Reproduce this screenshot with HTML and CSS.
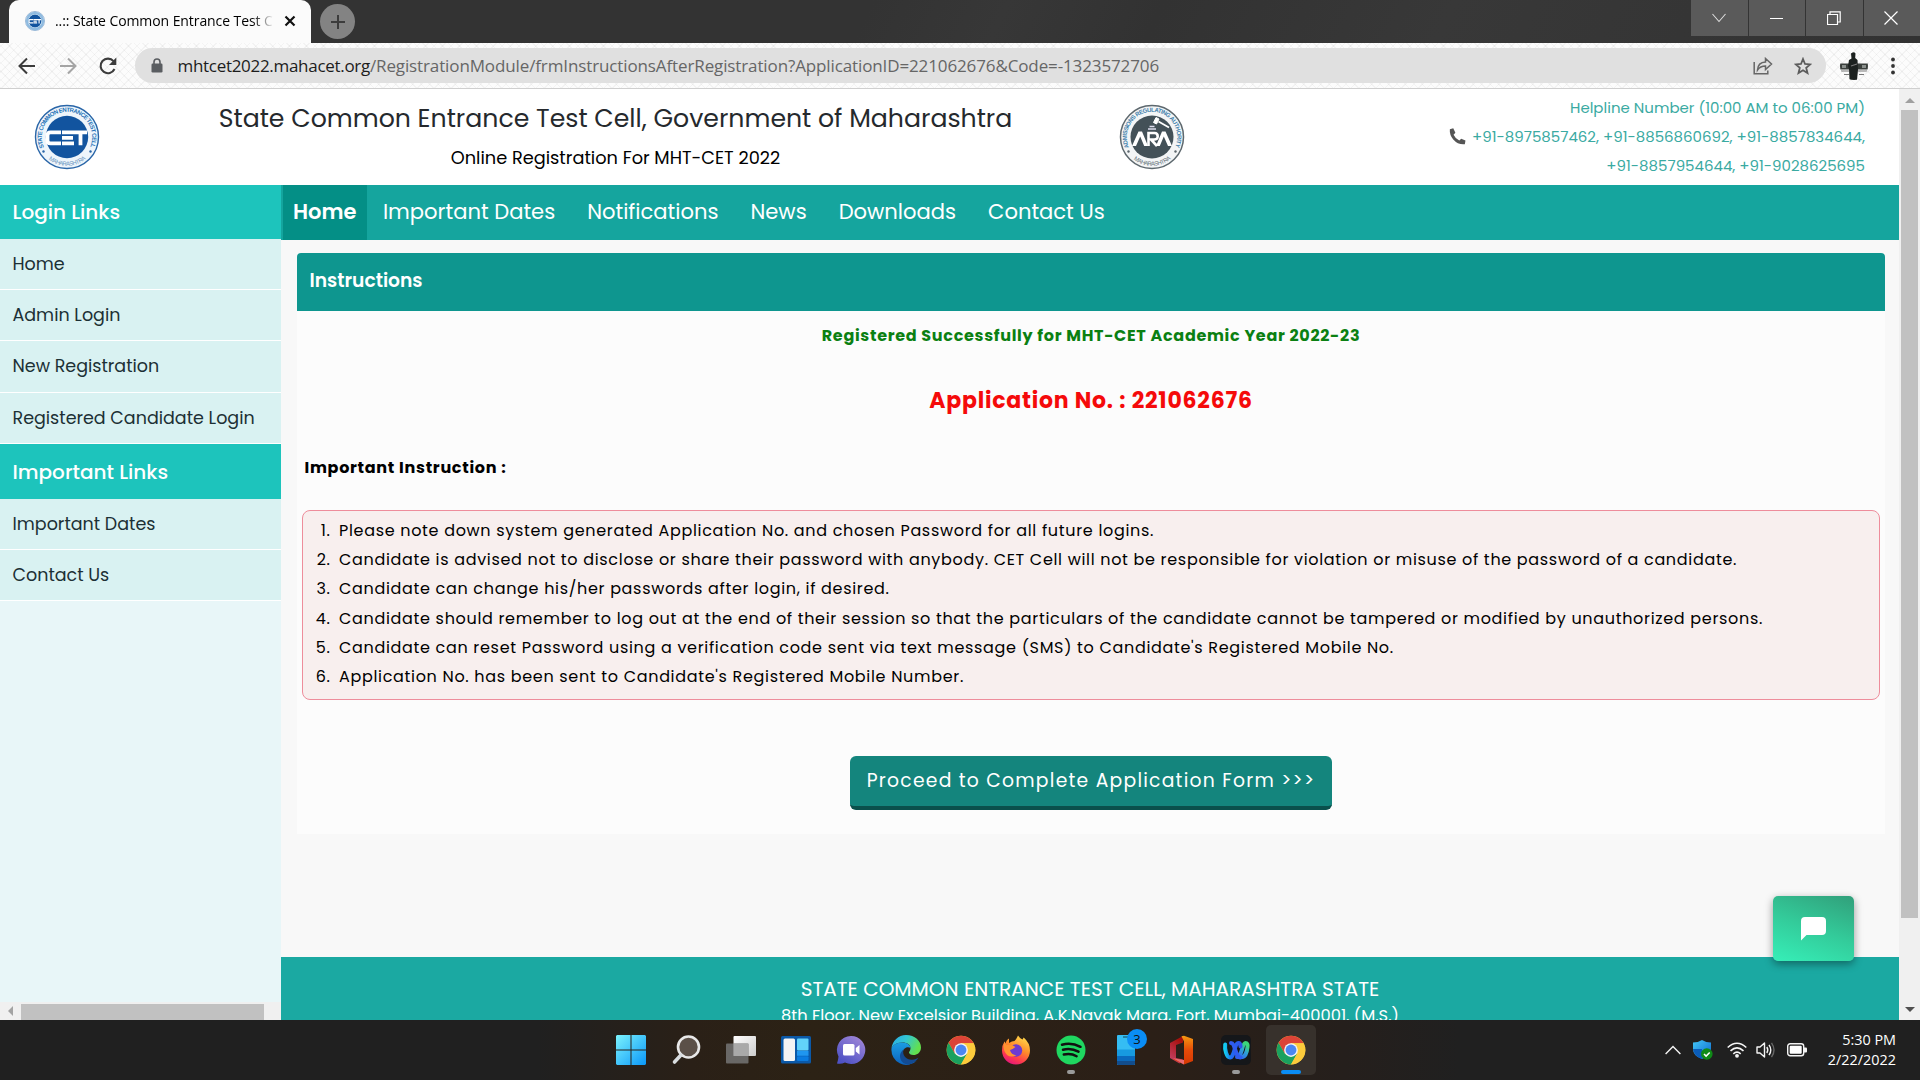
FILE: index.html
```html
<!DOCTYPE html>
<html lang="en">
<head>
<meta charset="utf-8">
<title>..:: State Common Entrance Test Cell</title>
<link rel="stylesheet" href="styles.css">
</head>
<body>
<svg class="defs" width="0" height="0" aria-hidden="true">
  <defs>
    <linearGradient id="win" x1="0" y1="0" x2="1" y2="1"><stop offset="0" stop-color="#7cf3fd"/><stop offset="1" stop-color="#0a97f8"/></linearGradient>
    <linearGradient id="tv" x1="0" y1="0" x2="1" y2="1"><stop offset="0" stop-color="#fff"/><stop offset="1" stop-color="#ccc"/></linearGradient>
    <linearGradient id="meet" x1="1" y1="0" x2="0.3" y2="1"><stop offset="0" stop-color="#a98bd8"/><stop offset=".5" stop-color="#7b6fd0"/><stop offset="1" stop-color="#4f52c4"/></linearGradient>
    <linearGradient id="edgeTop" x1="0" y1="0" x2="1" y2=".4"><stop offset="0" stop-color="#27a8e8"/><stop offset=".5" stop-color="#33c6d2"/><stop offset="1" stop-color="#62e04e"/></linearGradient>
    <linearGradient id="edgeBody" x1="0" y1="0" x2="0" y2="1"><stop offset="0" stop-color="#1b9de2"/><stop offset="1" stop-color="#0c62bd"/></linearGradient>
    <linearGradient id="fox" x1=".8" y1="0" x2=".3" y2="1"><stop offset="0" stop-color="#ffe14d"/><stop offset=".45" stop-color="#ff8a2a"/><stop offset=".75" stop-color="#ff3c4c"/><stop offset="1" stop-color="#e3157d"/></linearGradient>
    <linearGradient id="webex" x1="0" y1="0" x2="1" y2="0"><stop offset="0" stop-color="#12cdf0"/><stop offset=".4" stop-color="#1f6df2"/><stop offset="1" stop-color="#2f52e8"/></linearGradient>
    <linearGradient id="webexR" x1="0" y1="1" x2=".6" y2="0"><stop offset="0" stop-color="#2f62f0"/><stop offset=".6" stop-color="#2fa0d8"/><stop offset="1" stop-color="#3bd67a"/></linearGradient>
    <linearGradient id="office" x1="0" y1="0" x2="0" y2="1"><stop offset="0" stop-color="#f59a12"/><stop offset=".5" stop-color="#e64a08"/><stop offset="1" stop-color="#d43802"/></linearGradient>
    <linearGradient id="officeL" x1="0" y1="1" x2=".4" y2="0"><stop offset="0" stop-color="#c8476f"/><stop offset="1" stop-color="#a8100c"/></linearGradient>
    <linearGradient id="shield" x1="0" y1="0" x2="1" y2="1"><stop offset="0" stop-color="#42c5f5"/><stop offset="1" stop-color="#0b67cf"/></linearGradient>
    <symbol id="chrome" viewBox="0 0 48 48">
      <circle cx="24" cy="24" r="23" fill="#fccb3c"/>
      <path d="M24 13h20.2A23 23 0 0 0 4.1 12.5L14 30z" fill="#dc4437"/>
      <path d="M4.1 12.5A23 23 0 0 0 24 47l9.8-17.2L24 24l-9.8 5.8z" fill="#1aa15f"/>
      <path d="M24 47A23 23 0 0 0 44.2 13H24l9.6 16.8z" fill="#fccb3c"/>
      <circle cx="24" cy="24" r="11" fill="#f4f4f4"/><circle cx="24" cy="24" r="8.7" fill="#4a87f2"/>
    </symbol>
    <symbol id="cet" viewBox="0 0 66 66">
      <circle cx="33" cy="33" r="31.5" fill="#eef5fb" stroke="#2a66a8" stroke-width="1.4"/>
      <circle cx="33" cy="33" r="21.2" fill="#12549f"/>
      <g fill="none" stroke="#fff" stroke-width="3.8"><path d="M27 28.400H16.500q-3 0-3 3v5q0 3 3 3H27M28 28.400h12M28 33.900h11M28 39.400h12M39.500 28.400H53M46.500 28.400V41.200"/></g>
    </symbol>
  </defs>
</svg>

<header class="browser">
  <div class="tabstrip">
    <div class="tab">
      <svg class="favicon" viewBox="0 0 66 66"><use href="#cet"/><circle cx="33" cy="33" r="26.500" fill="none" stroke="#8fbbe0" stroke-width="8"/></svg>
      <span class="tab-title">..:: State Common Entrance Test C</span>
      <svg class="tab-close" viewBox="0 0 12 12"><path d="M1.500 1.500l9 9M10.500 1.500l-9 9" stroke="#111" stroke-width="2.200"/></svg>
    </div>
    <div class="newtab"><svg viewBox="0 0 16 16" width="16" height="16"><path d="M8 1v14M1 8h14" stroke="#3c3c3c" stroke-width="2"/></svg></div>
    <div class="winbtns">
      <span><svg viewBox="0 0 14 10" width="14" height="10"><path d="M.5 1 7 8.500 13.500 1" fill="none" stroke="#ddd" stroke-width="1.100"/></svg></span>
      <span><svg viewBox="0 0 14 10" width="14" height="10"><path d="M0 5.500h13" stroke="#fff"/></svg></span>
      <span><svg viewBox="0 0 14 14" width="14" height="14"><path d="M.5 3.500h10v10H.5zM3 3V.8h10.200V11H11" fill="none" stroke="#fff" stroke-width="1.200"/></svg></span>
      <span><svg viewBox="0 0 14 14" width="14" height="14"><path d="M.5.5l13 13M13.500.5l-13 13" stroke="#fff" stroke-width="1.200"/></svg></span>
    </div>
  </div>
  <div class="toolbar">
    <svg class="tb" viewBox="0 0 18 18"><path d="M17 9H2M9 1.500 1.500 9 9 16.500" fill="none" stroke="#3c3c3c" stroke-width="2"/></svg>
    <svg class="tb" viewBox="0 0 18 18"><path d="M1 9h15M9 1.500 16.500 9 9 16.500" fill="none" stroke="#a5a5a5" stroke-width="2"/></svg>
    <svg class="tb" viewBox="0 0 18 18"><path d="M15.500 12A7.300 7.300 0 1 1 14.500 4.200" fill="none" stroke="#3c3c3c" stroke-width="2.100"/><path d="M17.300.5V8H10z" fill="#3c3c3c"/></svg>
    <div class="omnibox">
      <svg class="lock" viewBox="0 0 12 15"><rect x=".5" y="5.500" width="11" height="9" rx="1.200" fill="#5a5d61"/><path d="M3 6V4a3 3 0 0 1 6 0v2" fill="none" stroke="#5a5d61" stroke-width="1.600"/></svg>
      <span class="url"><b>mhtcet2022.mahacet.org</b>/RegistrationModule/frmInstructionsAfterRegistration?ApplicationID=221062676&amp;Code=-1323572706</span>
      <svg class="share" viewBox="0 0 20 18"><path d="M1.200 5V16.800H14.800V13.500" fill="none" stroke="#666" stroke-width="1.500"/><path d="M4.500 13c.3-5 3-7.800 8-8V1.500l6 5.500-6 5.500V9C9 9 6.500 10 4.500 13z" fill="none" stroke="#666" stroke-width="1.500"/></svg>
      <svg class="star" viewBox="0 0 18 18"><path d="M9 2l2 5 5.200.4-4 3.400 1.300 5.200L9 13.200 4.500 16l1.300-5.200-4-3.400L7 7z" fill="none" stroke="#5c5c5c" stroke-width="1.800"/></svg>
    </div>
    <svg class="avatar" viewBox="0 0 28 28"><clipPath id="av"><circle cx="14" cy="14" r="14"/></clipPath><g clip-path="url(#av)"><path d="M0 11.500h28v6H0z" fill="#3a3f3c"/><path d="M2 13h4v3H2zM22 13h4v3h-4z" fill="#8a8f8c"/><path d="M1 19h8M18 19h9M4 22.500h5M19 22.500h5" stroke="#777" stroke-width="1.200"/><path d="M11 1.500q3-2.500 4.500 0l-.3 4.500 2.300 2 .5 10-1 10H9.500L9 17l-1-3 1-6 2.500-1.500z" fill="#1c211f"/><path d="M11 14l6-2" stroke="#777" stroke-width="1.300"/></g></svg>
    <svg class="dots" viewBox="0 0 4 18"><circle cx="2" cy="2.500" r="1.900"/><circle cx="2" cy="9" r="1.900"/><circle cx="2" cy="15.500" r="1.900"/></svg>
  </div>
</header>

<div class="viewport">
  <div class="page">
    <div class="masthead">
      <svg class="logo" viewBox="0 0 66 66"><use href="#cet"/>
        <path id="ringTop" d="M10.100 43.500A25.200 25.200 0 1 1 55.900 43.500" fill="none"/><path id="ringBottom" d="M11.700 52.800A30 30 0 0 0 54.300 52.800" fill="none"/>
        <text class="ring blue"><textPath href="#ringTop" textLength="100">STATE COMMON ENTRANCE TEST CELL</textPath></text>
        <text class="ring blue pale"><textPath href="#ringBottom" startOffset="4" textLength="40">MAHARASHTRA</textPath></text>
        <circle cx="9.500" cy="47.500" r="1.200" fill="#2a66a8"/><circle cx="56.500" cy="47.500" r="1.200" fill="#2a66a8"/>
      </svg>
      <div class="titles">
        <h1>State Common Entrance Test Cell, Government of Maharashtra</h1>
        <p>Online Registration For MHT-CET 2022</p>
      </div>
      <svg class="logo" viewBox="0 0 66 66">
        <circle cx="33" cy="33" r="31.500" fill="#f3f5f6" stroke="#5d686e" stroke-width="1.500"/><circle cx="33" cy="33" r="21.500" fill="#435158"/>
        <path d="M13 42l6.500-14.500h3.500L29 42h-3.800l-4-9.500L17 42zM37 42l6-14.500h3.500L53 42h-4l-4.200-9.500L40.800 42z" fill="#fff"/><path d="M29.500 42V29h6q3.200 0 3.200 3.300T35 35.500h-3l6 6.500" fill="none" stroke="#fff" stroke-width="2.600"/><path d="M29 25h8M30.500 22.500h5" stroke="#dde" stroke-width="1.500"/><path d="M37 13.500l-2.500 5 3 1.500 2.500-5z" fill="#fff" stroke="#fff" stroke-width="1"/><path d="M39.500 17.500l10.500 6" stroke="#fff" stroke-width="1.800"/>
        <text class="ring steel"><textPath href="#ringTop" textLength="100">ADMISSIONS REGULATING AUTHORITY</textPath></text>
        <text class="ring grey"><textPath href="#ringBottom" startOffset="4" textLength="40">MAHARASHTRA</textPath></text>
        <circle cx="9.500" cy="47.500" r="1.200" fill="#5d686e"/><circle cx="56.500" cy="47.500" r="1.200" fill="#5d686e"/>
      </svg>
      <div class="helpline">
        <div>Helpline Number (10:00 AM to 06:00 PM)</div>
        <div><svg viewBox="0 0 16 16" width="17" height="17"><path d="M.8 1.200 4 .3l2 4.200L4.300 6.300q1.600 3.600 5.400 5.500L11.500 10l4 1.800-.6 3.500Q8.600 16 4 10.800.3 6.500.8 1.200z" fill="#555"/></svg>+91-8975857462, +91-8856860692, +91-8857834644,</div>
        <div>+91-8857954644, +91-9028625695</div>
      </div>
    </div>
    <div class="columns">
      <aside class="sidebar">
        <h2>Login Links</h2>
        <a>Home</a>
        <a>Admin Login</a>
        <a>New Registration</a>
        <a>Registered Candidate Login</a>
        <h2>Important Links</h2>
        <a>Important Dates</a>
        <a>Contact Us</a>
        <div class="hscroll"><i class="arrow-left"></i><i class="hthumb"></i></div>
      </aside>
      <main class="main">
        <nav class="nav">
          <a class="on">Home</a>
          <a>Important Dates</a>
          <a>Notifications</a>
          <a>News</a>
          <a>Downloads</a>
          <a>Contact Us</a>
        </nav>
        <section class="panel">
          <h3>Instructions</h3>
          <p class="ok">Registered Successfully for MHT-CET Academic Year 2022-23</p>
          <p class="appno">Application No. : 221062676</p>
          <p class="lead">Important Instruction :</p>
          <ol class="rules">
            <li>Please note down system generated Application No. and chosen Password for all future logins.</li>
            <li>Candidate is advised not to disclose or share their password with anybody. CET Cell will not be responsible for violation or misuse of the password of a candidate.</li>
            <li>Candidate can change his/her passwords after login, if desired.</li>
            <li>Candidate should remember to log out at the end of their session so that the particulars of the candidate cannot be tampered or modified by unauthorized persons.</li>
            <li>Candidate can reset Password using a verification code sent via text message (SMS) to Candidate's Registered Mobile No.</li>
            <li>Application No. has been sent to Candidate's Registered Mobile Number.</li>
          </ol>
          <button class="proceed">Proceed to Complete Application Form &gt;&gt;&gt;</button>
        </section>
        <footer class="footer">
          <div class="org">STATE COMMON ENTRANCE TEST CELL, MAHARASHTRA STATE</div>
          <div class="addr">8th Floor, New Excelsior Building, A.K.Nayak Marg, Fort, Mumbai-400001. (M.S.)</div>
        </footer>
      </main>
    </div>
    <div class="chat"><svg viewBox="0 0 25 24" width="25" height="24"><path d="M4 0H21a4 4 0 0 1 4 4v10a4 4 0 0 1-4 4H5.500L0 23.500V4a4 4 0 0 1 4-4z" fill="#fff"/></svg></div>
  </div>
  <div class="vscroll"><i class="arrow-up"></i><i class="vthumb"></i><i class="arrow-down"></i></div>
</div>

<div class="taskbar">
  <div class="apps">
    <span><svg viewBox="0 0 30 30"><path d="M1 0h13.500v14.500H0V1zM15.500 0H29l1 1v13.500H15.500zM0 15.500h14.500V30H1l-1-1zM15.500 15.500H30V29l-1 1H15.500z" fill="url(#win)"/></svg></span>
    <span><svg viewBox="0 0 30 30"><circle cx="17.500" cy="12" r="10.500" fill="#5b5048" stroke="#e8e8e8" stroke-width="2.600"/><path d="M10 20l-6.500 7" stroke="#d9dde0" stroke-width="3.600" stroke-linecap="round"/></svg></span>
    <span><svg viewBox="0 0 30 30"><rect x="7.500" y="1" width="22.500" height="20" rx="1" fill="url(#tv)"/><rect x="0" y="8.500" width="22.500" height="20" rx="1" fill="#747474" opacity=".85"/><path d="M7.500 8.500h15v12.500h-15z" fill="#a9a9a9"/></svg></span>
    <span><svg viewBox="0 0 30 30"><rect y="1" width="30" height="27.500" rx="1.500" fill="#0b59a8"/><rect x="2.500" y="3.500" width="11.500" height="22.500" rx="1.500" fill="#f4f4f4"/><rect x="16" y="3.500" width="11.500" height="12" rx="1" fill="#62d2fa"/><rect x="16" y="16" width="11.500" height="4.800" fill="#1f96f0"/><rect x="16" y="21.300" width="11.500" height="4.700" rx="1" fill="#0a7be0"/></svg></span>
    <span><svg viewBox="0 0 30 30"><path d="M15 1a14 14 0 1 1-6 26.500Q5 29.500 1 28.500 2.200 25 2.500 21.500A14 14 0 0 1 15 1z" fill="url(#meet)"/><rect x="7" y="9" width="11.500" height="11.500" rx="1.500" fill="#fff"/><path d="M19.800 13l3.700-3v9.500l-3.700-3z" fill="#fff"/></svg></span>
    <span><svg viewBox="0 0 30 30"><path d="M.5 13.500A14.500 14.500 0 0 1 15 0c9 0 15 6 15 12.500 0 5-4 7.500-7.500 7.500-3 0-4.500-1.500-4.500-2.500s1.500-1.500 1.500-4.500S17 7.500 11 7.500 1.500 11 .5 13.500z" fill="url(#edgeTop)"/><path d="M.5 13.500C2 9.500 6.500 7.500 11 7.500c5.500 0 8.500 3 8.500 5.500-2-1.700-7-1-8 4.500-.8 6 5 10.500 10 9.800q2-.3 4-1.300A15 15 0 0 1 .5 13.500z" fill="url(#edgeBody)"/><path d="M12.500 14.500c-1.700 5.500 3 10.500 8.500 10.300 3 0 5-1.300 6.500-2A15 15 0 0 1 18 29.500C10 30 5.500 20 12.500 14.500z" fill="#134b93"/></svg></span>
    <span><svg><use href="#chrome"/></svg></span>
    <span><svg viewBox="0 0 30 30"><path d="M17 .5q1 2 4.500 4l1.200-2Q29 8 29 15.500A14 14 0 0 1 1 15.500Q1 10 3.500 6.500l1 2.500Q5 5 8 3.500V8q3-2 5.500-2Q15.500 4 17 .5z" fill="url(#fox)"/><circle cx="15" cy="15.500" r="6.200" fill="#6c3ad0"/><path d="M3.500 6.500l2 3.500h5.500l3.500 2q-3 2.500-5.500 3 1 5 6.500 5.200-8 3.500-11.500-3Q1.500 12 3.500 6.500z" fill="#ff9430"/></svg></span>
    <span class="run"><svg viewBox="0 0 30 30"><circle cx="15" cy="15" r="14.500" fill="#1fd760"/><path d="M6 9.700q9.500-2.700 18.500 2.100M7 14.700q8-2.200 15.500 2M7.800 19.500q7-1.800 12.800 1.700" fill="none" stroke="#111" stroke-width="2.500" stroke-linecap="round"/></svg></span>
    <span><svg viewBox="0 0 30 30"><path d="M6 1q0-1 1-1h16q1 0 1 1v28q0 1-1 1H7q-1 0-1-1z" fill="#35bdf3"/><path d="M6 14.500h18V21H6z" fill="#179ae0"/><path d="M6 21h18v5.500H6z" fill="#0a69bd"/><path d="M6 26h18v3q0 1-1 1H7q-1 0-1-1z" fill="#124d8d"/><path d="M12 2h5" stroke="#145"/></svg><em>3</em></span>
    <span><svg viewBox="0 0 30 30"><path d="M4 8 17 1v6.500L10 10v13l7 1.500-3.500 4L4 23z" fill="url(#officeL)"/><path d="M15.500 1.200 18 .8l9 3.200v22l-9 3.500-11.500-5.500L18 25V6.500z" fill="url(#office)"/><path d="M7 23.200 18 25v4.500z" fill="#e96a73"/></svg></span>
    <span class="run"><svg viewBox="0 0 30 30"><rect width="30" height="30" rx="5" fill="#15171a"/><g fill="none" stroke-width="4" stroke-linecap="round"><path d="M16 22c5 0 5-14 8.500-14 1.500 0 2.500 1.500 2 4-.5 5-2.500 9.500-5 10" stroke="url(#webexR)"/><path d="M4.200 9.500C3.500 14 5.500 22.500 9 22.500c4.500 0 4.500-14.500 8.500-14.500 1.500 0 2 2 2 3.500" stroke="url(#webex)"/><path d="M10 8c4.500 0 4 14.500 9.500 14.500" stroke="#2f5cf0"/></g></svg></span>
    <span class="active"><svg><use href="#chrome"/></svg></span>
  </div>
  <div class="tray">
    <svg viewBox="0 0 16 10" width="16" height="10"><path d="M.6 9 8 1.500 15.400 9" fill="none" stroke="#f2f2f2" stroke-width="1.400"/></svg>
    <svg class="security" viewBox="0 0 20 20" width="20" height="20"><path d="M9 0q4 2.500 9 2.500V9q0 7-9 10Q0 16 0 9V2.500Q5 2.500 9 0z" fill="url(#shield)"/><path d="M0 9h9v10Q1 16.500 0 9z" fill="#0b5cb8"/><circle cx="13.800" cy="14" r="5.800" fill="#0f8a16"/><path d="M11 14l2.100 2.100L16.700 12.500" fill="none" stroke="#fff" stroke-width="1.500"/></svg>
    <svg class="wifi" viewBox="0 0 20 16" width="20" height="16"><g fill="none" stroke="#f4f4f4" stroke-width="1.600"><path d="M.7 5.500q9.300-8.500 18.600 0M3.500 8.800q6.500-6 13 0M6.300 11.800q3.700-3.300 7.400 0"/></g><circle cx="10" cy="13.800" r="1.900" fill="#f4f4f4"/></svg>
    <svg class="volume" viewBox="0 0 20 16" width="20" height="16"><path d="M1 5h3l4.500-4v14L4 11H1z" fill="none" stroke="#f4f4f4" stroke-width="1.400" stroke-linejoin="round"/><path d="M10.800 5q2 3 0 6M13 2.800q3.600 5.200 0 10.400" fill="none" stroke="#f4f4f4" stroke-width="1.400"/><path d="M15.500.8q5 7.200 0 14.400" fill="none" stroke="#666" stroke-width="1.400"/></svg>
    <svg class="battery" viewBox="0 0 20 14" width="20" height="14"><rect x=".7" y=".7" width="16" height="12" rx="2.500" fill="none" stroke="#f4f4f4" stroke-width="1.400"/><rect x="2.700" y="2.700" width="12" height="8" rx="1" fill="#fff"/><path d="M17 4.500h2q1 0 1 1v3q0 1-1 1h-2z" fill="#f4f4f4"/></svg>
    <div class="clock"><span>5:30 PM</span><span>2/22/2022</span></div>
  </div>
</div>
</body>
</html>
```
FILE: styles.css
```css
* { box-sizing: border-box; }
body { margin: 0; width: 1920px; height: 1080px; overflow: hidden; display: flex; flex-direction: column; font-family: Poppins, Inter, "Noto Sans", sans-serif; color: #000; }
h1, h2, h3, p, ol { margin: 0; padding: 0; font-weight: 400; }
svg { display: block; flex: none; }
.defs { position: absolute; }

/* browser chrome */
.browser { flex: none; font-family: "Segoe UI", "Open Sans", sans-serif; }
.tabstrip { height: 43px; background: linear-gradient(115deg, #333 0 45%, #373737 52%, #323232 60%, #383838 75%, #323232); display: flex; padding-left: 9px; }
.tab { width: 302px; height: 43px; border-radius: 10px 10px 0 0; background: #fbfbfb; display: flex; align-items: center; padding: 0 15px 2px 16px; }
.favicon { width: 20px; height: 20px; margin-right: 10px; }
.tab-title { width: 219px; font-size: 14px; letter-spacing: -.08px; overflow: hidden; white-space: nowrap; -webkit-mask-image: linear-gradient(90deg, #000 90%, transparent); mask-image: linear-gradient(90deg, #000 90%, transparent); }
.tab-close { width: 12px; height: 12px; margin-left: 10px; }
.newtab { width: 35px; height: 35px; margin: 4px 0 0 9px; border-radius: 50%; background: #838383; display: grid; place-items: center; }
.winbtns { margin-left: auto; display: flex; gap: 1px; height: 36px; }
.winbtns span { width: 56.5px; background: #5a5a5a; display: grid; place-items: center; }
.winbtns span:last-child { padding-right: 2px; }
.toolbar { height: 46px; border-bottom: 1px solid #cfcfcf; background: repeating-linear-gradient(45deg, rgba(0,0,0,.035) 0 1px, transparent 1px 6px), repeating-linear-gradient(-45deg, rgba(0,0,0,.035) 0 1px, transparent 1px 6px), #fcfcfc; display: flex; align-items: center; padding-left: 18px; }
.tb { width: 18px; height: 18px; margin-right: 22.5px; }
.omnibox { width: 1691px; height: 35px; margin-left: -5px; border-radius: 18px; background: #e0e0e0; display: flex; align-items: center; padding: 0 14px 0 16px; }
.lock { width: 12px; height: 15px; }
.url { margin-left: 15px; font-size: 17px; letter-spacing: -.12px; color: #666; white-space: nowrap; }
.url b { font-weight: 400; letter-spacing: -.3px; color: #1c1c1c; }
.share { width: 20px; height: 18px; margin-left: auto; margin-right: 21px; }
.star { width: 18px; height: 18px; }
.avatar { width: 28px; height: 28px; margin-left: 14px; }
.dots { width: 4px; height: 18px; margin-left: 23px; fill: #333; }

/* page header */
.viewport { flex: none; height: 931px; display: flex; overflow: hidden; }
.page { position: relative; width: 1899px; display: flex; flex-direction: column; }
.masthead { height: 96px; background: #fff; display: flex; }
.logo { width: 66px; height: 66px; margin: 15px 0 0 34px; }
.ring { font: 700 6px "Liberation Sans", sans-serif; }
.blue { fill: #2573b8; }
.pale { fill: #6c95bf; font-weight: 400; }
.steel { fill: #4180ab; }
.grey { fill: #66737a; font-weight: 400; }
.titles { width: 1019px; text-align: center; padding-left: 12px; }
.titles h1 { font-size: 25.2px; line-height: 36px; padding-top: 12px; color: #25292d; }
.titles p { font-size: 17.75px; line-height: 26px; padding-top: 8px; }
.masthead .titles + .logo { margin-left: 0; }
.helpline { margin-left: auto; padding: 4px 34px 0 0; color: #3aaaa2; font-size: 15px; line-height: 29px; text-align: right; }
.helpline div { display: flex; justify-content: flex-end; align-items: center; gap: 6px; }

/* side links */
.columns { flex: 1; display: flex; min-height: 0; }
.sidebar { width: 281px; background: #e8f6f8; display: flex; flex-direction: column; }
.sidebar h2 { height: 55px; background: #1dc4bc; color: #fff; font-size: 20px; font-weight: 500; line-height: 57px; padding-left: 12.5px; }
.sidebar h2:first-child { height: 54px; line-height: 54px; }
.sidebar a { height: 51.2px; background: #d9f2f2; border-bottom: 1px solid #fff; color: #1c3035; font-size: 17.5px; line-height: 50.6px; padding-left: 12.5px; }
.hscroll { margin-top: auto; height: 18px; background: #f0f0f0; display: flex; align-items: center; padding-left: 8px; }
.arrow-left { border: 5px solid transparent; border-left: 0; border-right-color: #a3a3a3; }
.hthumb { margin: 2px 0 0 8px; width: 243px; height: 16px; background: #c1c1c1; }

/* main column */
.main { width: 1618px; background: #f8f8f8; display: flex; flex-direction: column; }
.nav { height: 55px; background: #15a59e; display: flex; padding-left: 2px; }
.nav a { padding: 0 16px; color: #fff; font-size: 21.1px; line-height: 53px; }
.nav .on { padding: 0 10.5px 0 10px; background: #048f86; font-size: 21px; font-weight: 600; }
.panel { margin: 13px 14px 0 16px; height: 581px; background: #fcfcfc; display: flex; flex-direction: column; align-items: center; }
.panel h3 { align-self: stretch; height: 58px; border-radius: 4px 4px 0 0; background: #0e968f; color: #fff; font-size: 18.7px; font-weight: 600; line-height: 55px; padding-left: 12.5px; }
.ok { margin-top: 13px; font-size: 16px; line-height: 24px; letter-spacing: .68px; font-weight: 700; color: #0b8012; }
.appno { margin-top: 37px; font-size: 22px; line-height: 32px; letter-spacing: .77px; font-weight: 700; color: #f50a0a; }
.lead { align-self: flex-start; margin: 39px 0 0 7.5px; font-size: 16px; line-height: 24px; letter-spacing: .7px; font-weight: 700; }
.rules { margin-top: 30px; width: 1578px; height: 190px; border: 1px solid #ee8d9b; border-radius: 8px; background: #f8efee; font-size: 16px; line-height: 29.2px; padding: 5px 0 0 32.5px; letter-spacing: .68px; white-space: nowrap; }
.rules li { padding-left: 3.5px; }
.proceed { margin-top: 56px; width: 482px; height: 54px; border: 0; border-bottom: 4px solid #0a504c; border-radius: 6px; background: #14857d; color: #fff; font: 18.75px Poppins, Inter, sans-serif; letter-spacing: 1.24px; padding: 0 0 2px; white-space: nowrap; }
.footer { margin-top: 123px; flex: 1; overflow: hidden; background: #1ba9a2; color: #fff; text-align: center; padding-top: 18px; }
.org { font-size: 20px; line-height: 28px; }
.addr { font-size: 16.25px; line-height: 26px; }
.chat { position: absolute; left: 1773px; top: 807px; width: 81px; height: 65px; border-radius: 5px; background: linear-gradient(20deg, #36efb8, #33cb9a 50%, #319f7a); box-shadow: 0 3px 8px rgba(0,0,0,.4); display: grid; place-items: center; }

.vscroll { width: 21px; background: #f0f0f0; display: flex; flex-direction: column; align-items: center; padding-top: 9px; }
.arrow-up { border: 5px solid transparent; border-top: 0; border-bottom-color: #a0a0a0; }
.vthumb { margin-top: 7px; width: 17px; height: 808px; background: #c1c1c1; }
.arrow-down { margin-top: 89px; border: 5px solid transparent; border-bottom: 0; border-top-color: #505050; }

/* taskbar */
.taskbar { height: 60px; background: linear-gradient(90deg, #202020 28%, #2a2017 36%, #2c2215 42%, #2b1f17 60%, #251f1c 70%, #202020 76%); display: flex; align-items: center; }
.apps { display: flex; gap: 5px; margin-left: 606px; }
.apps span { position: relative; width: 50px; height: 50px; border-radius: 5px; display: grid; place-items: center; }
.apps svg { width: 30px; height: 30px; }
.apps em { position: absolute; left: 26px; top: 4px; width: 20px; height: 20px; border-radius: 50%; background: #0a8df5; color: #111; font: 13px/20px "Open Sans", sans-serif; text-align: center; }
.apps .active { background: #37312c; }
.run::after, .active::after { content: ""; position: absolute; bottom: 1px; left: 21px; width: 8px; height: 4px; border-radius: 2px; background: #9a9a9a; }
.active::after { left: 15px; width: 20px; background: #0a8df5; }
.tray { margin-left: auto; display: flex; align-items: center; padding-right: 24px; }
.security { margin-left: 12px; }
.wifi { margin-left: 14px; }
.volume { margin-left: 9px; }
.battery { margin-left: 11px; }
.clock { width: 89px; display: flex; flex-direction: column; align-items: flex-end; color: #fff; font: 14.4px/20px "Segoe UI", "Open Sans", sans-serif; }
```
